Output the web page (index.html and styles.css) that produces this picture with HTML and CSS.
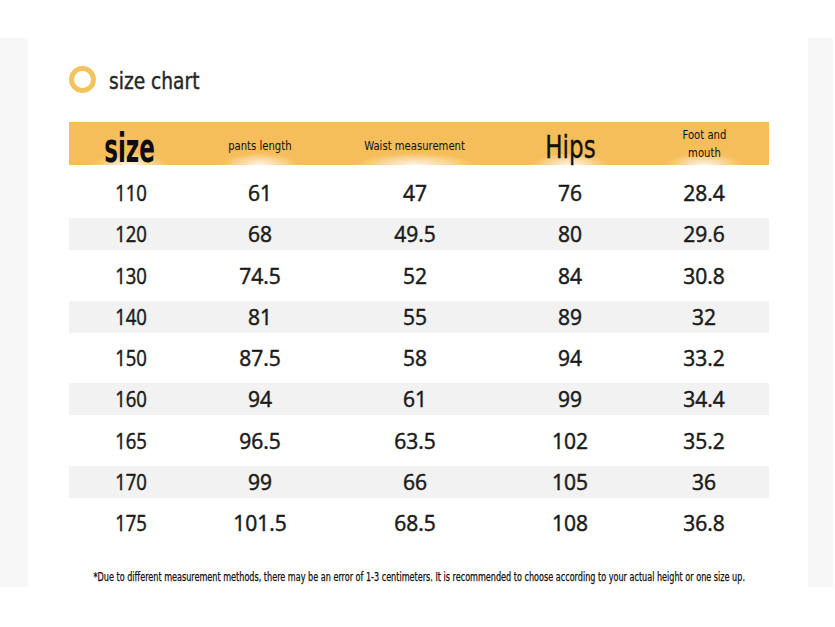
FILE: index.html
```html
<!DOCTYPE html>
<html lang="en">
<head>
<meta charset="utf-8">
<title>size chart</title>
<link rel="stylesheet" href="styles.css">
</head>
<body>
<div class="top-band"></div>
<div class="frame">
  <div class="strip strip-left"></div>
  <main class="panel">
    <div class="title-row">
      <span class="ring"></span>
      <h1 class="title">size chart</h1>
    </div>
    <div class="chart">
      <div class="head">
        <div class="hcell hcell-size"><span class="big-bold">size</span></div>
        <div class="hcell"><span class="small-label">pants length</span></div>
        <div class="hcell hcell-waist"><span class="small-label">Waist measurement</span></div>
        <div class="hcell"><span class="big">Hips</span></div>
        <div class="hcell"><span class="small-label two-line">Foot and<br>mouth</span></div>
      </div>
      <div class="body">
        <div class="row"><span>110</span><span>61</span><span>47</span><span>76</span><span>28.4</span></div>
        <div class="row alt"><span>120</span><span>68</span><span>49.5</span><span>80</span><span>29.6</span></div>
        <div class="row"><span>130</span><span>74.5</span><span>52</span><span>84</span><span>30.8</span></div>
        <div class="row alt"><span>140</span><span>81</span><span>55</span><span>89</span><span>32</span></div>
        <div class="row"><span>150</span><span>87.5</span><span>58</span><span>94</span><span>33.2</span></div>
        <div class="row alt"><span>160</span><span>94</span><span>61</span><span>99</span><span>34.4</span></div>
        <div class="row"><span>165</span><span>96.5</span><span>63.5</span><span>102</span><span>35.2</span></div>
        <div class="row alt"><span>170</span><span>99</span><span>66</span><span>105</span><span>36</span></div>
        <div class="row"><span>175</span><span>101.5</span><span>68.5</span><span>108</span><span>36.8</span></div>
      </div>
      <div class="note"><span class="note-text">*Due to different measurement methods, there may be an error of 1-3 centimeters. It is recommended to choose according to your actual height or one size up.</span></div>
    </div>
  </main>
  <div class="strip strip-right"></div>
</div>
</body>
</html>
```
FILE: styles.css
```css
* { box-sizing: border-box; }
html, body { margin: 0; padding: 0; background: #ffffff; }
body { width: 835px; height: 627px; overflow: hidden; font-family: "DejaVu Sans Condensed", "Liberation Sans", sans-serif; }

.top-band { height: 38px; }
.frame { display: flex; height: 549px; }
.strip { background: #f7f7f7; }
.strip-left { width: 28px; }
.strip-right { width: 25px; margin-right: 2px; }
.panel { width: 780px; background: #fff; padding: 28px 0 0 41px; }

.title-row { display: flex; align-items: center; height: 27px; gap: 13px; }
.ring { width: 27px; height: 27px; border-radius: 50%; border: 5px solid #f4c35e; flex: none; }
.title { margin: 0; font-size: 23px; font-weight: normal; color: #262626; line-height: 27px; position: relative; top: 2px;
  display: inline-block; transform: scaleX(0.9); transform-origin: left center; -webkit-text-stroke: 0.4px #262626; }

.chart { width: 700px; margin-top: 29px; }
.head, .row { display: grid; grid-template-columns: 122px 138px 172px 138px 130px; }
.head { height: 43px; background: #f6bd5b; }
.hcell { display: flex; align-items: center; justify-content: center; text-align: center; color: #111;
  background: radial-gradient(ellipse 38px 12px at 50% 100%, rgba(255,255,255,0.85), rgba(255,255,255,0) 100%); }
.hcell-size { align-items: flex-end; }
.hcell-waist { background: radial-gradient(ellipse 60px 12px at 50% 100%, rgba(255,255,255,0.85), rgba(255,255,255,0) 100%); }
.big-bold { font-size: 40px; font-weight: bold; line-height: 1; display: inline-block; transform: scaleX(0.64); margin-bottom: -3px; color: #0d0d0d; }
.big { font-size: 32px; line-height: 1; display: inline-block; transform: scaleX(0.8); position: relative; top: 3px; -webkit-text-stroke: 0.3px #111; }
.small-label { font-size: 13px; line-height: 18px; position: relative; top: 2px; display: inline-block; transform: scaleX(0.86); }
.two-line { top: 0; }

.body { display: flex; flex-direction: column; gap: 9.25px; margin-top: 12px; }
.row { height: 32px; align-items: center; font-family: "Open Sans", "Lato", sans-serif; font-size: 21px; font-weight: normal; color: #1a1a1a; -webkit-text-stroke: 0.5px #1a1a1a; }
.row span { text-align: center; }
.row span:first-child { transform: translateX(1px) scaleX(0.88); }
.row.alt { background: #f2f2f2; }

.note { margin: 31px 0 0; text-align: center; line-height: 14px; white-space: nowrap; display: flex; justify-content: center; }
.note-text { font-size: 12px; color: #111; display: inline-block; transform: scaleX(0.75); flex: none; -webkit-text-stroke: 0.25px #111; }
```
